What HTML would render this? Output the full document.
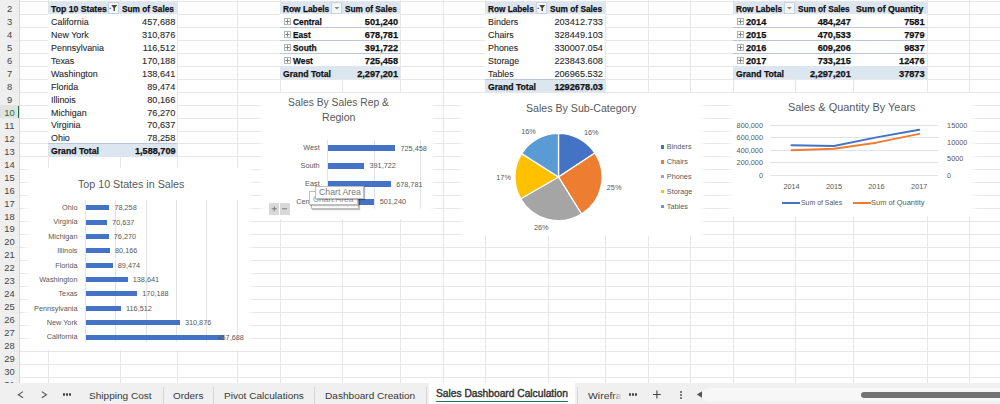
<!DOCTYPE html>
<html><head><meta charset="utf-8"><style>
html,body{margin:0;padding:0;width:1000px;height:404px;overflow:hidden;background:#fff}
body{position:relative;font-family:"Liberation Sans",sans-serif}
.t{position:absolute;white-space:pre;font-family:"Liberation Sans",sans-serif}
</style></head><body>
<div style="position:absolute;left:0.00px;top:0.00px;width:1000.00px;height:404.00px;background:#ffffff;"></div>
<div style="position:absolute;left:19.30px;top:1.00px;width:980.70px;height:1.00px;background:#e7e7e7;"></div>
<div style="position:absolute;left:19.30px;top:14.00px;width:980.70px;height:1.00px;background:#e7e7e7;"></div>
<div style="position:absolute;left:19.30px;top:27.00px;width:980.70px;height:1.00px;background:#e7e7e7;"></div>
<div style="position:absolute;left:19.30px;top:40.00px;width:980.70px;height:1.00px;background:#e7e7e7;"></div>
<div style="position:absolute;left:19.30px;top:53.00px;width:980.70px;height:1.00px;background:#e7e7e7;"></div>
<div style="position:absolute;left:19.30px;top:66.00px;width:980.70px;height:1.00px;background:#e7e7e7;"></div>
<div style="position:absolute;left:19.30px;top:79.00px;width:980.70px;height:1.00px;background:#e7e7e7;"></div>
<div style="position:absolute;left:19.30px;top:92.00px;width:980.70px;height:1.00px;background:#e7e7e7;"></div>
<div style="position:absolute;left:19.30px;top:105.00px;width:980.70px;height:1.00px;background:#e7e7e7;"></div>
<div style="position:absolute;left:19.30px;top:118.00px;width:980.70px;height:1.00px;background:#e7e7e7;"></div>
<div style="position:absolute;left:19.30px;top:131.00px;width:980.70px;height:1.00px;background:#e7e7e7;"></div>
<div style="position:absolute;left:19.30px;top:143.00px;width:980.70px;height:1.00px;background:#e7e7e7;"></div>
<div style="position:absolute;left:19.30px;top:156.00px;width:980.70px;height:1.00px;background:#e7e7e7;"></div>
<div style="position:absolute;left:19.30px;top:169.00px;width:980.70px;height:1.00px;background:#e7e7e7;"></div>
<div style="position:absolute;left:19.30px;top:182.00px;width:980.70px;height:1.00px;background:#e7e7e7;"></div>
<div style="position:absolute;left:19.30px;top:195.00px;width:980.70px;height:1.00px;background:#e7e7e7;"></div>
<div style="position:absolute;left:19.30px;top:208.00px;width:980.70px;height:1.00px;background:#e7e7e7;"></div>
<div style="position:absolute;left:19.30px;top:221.00px;width:980.70px;height:1.00px;background:#e7e7e7;"></div>
<div style="position:absolute;left:19.30px;top:234.00px;width:980.70px;height:1.00px;background:#e7e7e7;"></div>
<div style="position:absolute;left:19.30px;top:247.00px;width:980.70px;height:1.00px;background:#e7e7e7;"></div>
<div style="position:absolute;left:19.30px;top:260.00px;width:980.70px;height:1.00px;background:#e7e7e7;"></div>
<div style="position:absolute;left:19.30px;top:273.00px;width:980.70px;height:1.00px;background:#e7e7e7;"></div>
<div style="position:absolute;left:19.30px;top:286.00px;width:980.70px;height:1.00px;background:#e7e7e7;"></div>
<div style="position:absolute;left:19.30px;top:299.00px;width:980.70px;height:1.00px;background:#e7e7e7;"></div>
<div style="position:absolute;left:19.30px;top:312.00px;width:980.70px;height:1.00px;background:#e7e7e7;"></div>
<div style="position:absolute;left:19.30px;top:325.00px;width:980.70px;height:1.00px;background:#e7e7e7;"></div>
<div style="position:absolute;left:19.30px;top:338.00px;width:980.70px;height:1.00px;background:#e7e7e7;"></div>
<div style="position:absolute;left:19.30px;top:351.00px;width:980.70px;height:1.00px;background:#e7e7e7;"></div>
<div style="position:absolute;left:19.30px;top:364.00px;width:980.70px;height:1.00px;background:#e7e7e7;"></div>
<div style="position:absolute;left:19.30px;top:377.00px;width:980.70px;height:1.00px;background:#e7e7e7;"></div>
<div style="position:absolute;left:48.00px;top:0.00px;width:1.00px;height:383.30px;background:#e7e7e7;"></div>
<div style="position:absolute;left:120.00px;top:0.00px;width:1.00px;height:383.30px;background:#e7e7e7;"></div>
<div style="position:absolute;left:177.00px;top:0.00px;width:1.00px;height:383.30px;background:#e7e7e7;"></div>
<div style="position:absolute;left:237.00px;top:0.00px;width:1.00px;height:383.30px;background:#e7e7e7;"></div>
<div style="position:absolute;left:280.00px;top:0.00px;width:1.00px;height:383.30px;background:#e7e7e7;"></div>
<div style="position:absolute;left:342.00px;top:0.00px;width:1.00px;height:383.30px;background:#e7e7e7;"></div>
<div style="position:absolute;left:400.00px;top:0.00px;width:1.00px;height:383.30px;background:#e7e7e7;"></div>
<div style="position:absolute;left:443.00px;top:0.00px;width:1.00px;height:383.30px;background:#e7e7e7;"></div>
<div style="position:absolute;left:485.00px;top:0.00px;width:1.00px;height:383.30px;background:#e7e7e7;"></div>
<div style="position:absolute;left:548.00px;top:0.00px;width:1.00px;height:383.30px;background:#e7e7e7;"></div>
<div style="position:absolute;left:605.00px;top:0.00px;width:1.00px;height:383.30px;background:#e7e7e7;"></div>
<div style="position:absolute;left:648.00px;top:0.00px;width:1.00px;height:383.30px;background:#e7e7e7;"></div>
<div style="position:absolute;left:690.00px;top:0.00px;width:1.00px;height:383.30px;background:#e7e7e7;"></div>
<div style="position:absolute;left:733.00px;top:0.00px;width:1.00px;height:383.30px;background:#e7e7e7;"></div>
<div style="position:absolute;left:795.00px;top:0.00px;width:1.00px;height:383.30px;background:#e7e7e7;"></div>
<div style="position:absolute;left:853.00px;top:0.00px;width:1.00px;height:383.30px;background:#e7e7e7;"></div>
<div style="position:absolute;left:927.00px;top:0.00px;width:1.00px;height:383.30px;background:#e7e7e7;"></div>
<div style="position:absolute;left:969.00px;top:0.00px;width:1.00px;height:383.30px;background:#e7e7e7;"></div>
<div style="position:absolute;left:48.00px;top:1.50px;width:129.00px;height:155.40px;background:#ffffff;"></div>
<div style="position:absolute;left:48.00px;top:1.50px;width:129.00px;height:12.95px;background:#dce6f1;"></div>
<div style="position:absolute;left:107.70px;top:1.70px;width:11.50px;height:12.25px;background:#f4f6fa;border:1px solid #c9d3e0;box-sizing:border-box;"></div>
<svg style="position:absolute;left:107.70px;top:1.70px" width="11.50" height="12.25"><path d="M3.25 3.12h6l-2.3 3v3h-1.4v-3z" fill="#444"/><rect x="1.55" y="5.82" width="1.6" height="0.9" fill="#444"/></svg>
<div class="t" style="left:51.00px;top:4.91px;font-size:9.2px;line-height:9.2px;color:#111111;font-weight:bold;transform:scaleX(0.9470);transform-origin:0 0;-webkit-text-stroke:0.25px #111111;">Top 10 States</div>
<div class="t" style="left:122.00px;top:4.91px;font-size:9.2px;line-height:9.2px;color:#111111;font-weight:bold;transform:scaleX(0.9001);transform-origin:0 0;-webkit-text-stroke:0.25px #111111;">Sum of Sales</div>
<div class="t" style="left:51.00px;top:17.86px;font-size:9.2px;line-height:9.2px;color:#2a2a2a;transform:scaleX(0.9700);transform-origin:0 0;-webkit-text-stroke:0.1px #2a2a2a;">California</div>
<div class="t" style="left:142.04px;top:17.86px;font-size:9.2px;line-height:9.2px;color:#2a2a2a;-webkit-text-stroke:0.1px #2a2a2a;">457,688</div>
<div class="t" style="left:51.00px;top:30.81px;font-size:9.2px;line-height:9.2px;color:#2a2a2a;transform:scaleX(0.9700);transform-origin:0 0;-webkit-text-stroke:0.1px #2a2a2a;">New York</div>
<div class="t" style="left:142.04px;top:30.81px;font-size:9.2px;line-height:9.2px;color:#2a2a2a;-webkit-text-stroke:0.1px #2a2a2a;">310,876</div>
<div class="t" style="left:51.00px;top:43.76px;font-size:9.2px;line-height:9.2px;color:#2a2a2a;transform:scaleX(0.9700);transform-origin:0 0;-webkit-text-stroke:0.1px #2a2a2a;">Pennsylvania</div>
<div class="t" style="left:142.73px;top:43.76px;font-size:9.2px;line-height:9.2px;color:#2a2a2a;-webkit-text-stroke:0.1px #2a2a2a;">116,512</div>
<div class="t" style="left:51.00px;top:56.71px;font-size:9.2px;line-height:9.2px;color:#2a2a2a;transform:scaleX(0.9700);transform-origin:0 0;-webkit-text-stroke:0.1px #2a2a2a;">Texas</div>
<div class="t" style="left:142.04px;top:56.71px;font-size:9.2px;line-height:9.2px;color:#2a2a2a;-webkit-text-stroke:0.1px #2a2a2a;">170,188</div>
<div class="t" style="left:51.00px;top:69.66px;font-size:9.2px;line-height:9.2px;color:#2a2a2a;transform:scaleX(0.9700);transform-origin:0 0;-webkit-text-stroke:0.1px #2a2a2a;">Washington</div>
<div class="t" style="left:142.04px;top:69.66px;font-size:9.2px;line-height:9.2px;color:#2a2a2a;-webkit-text-stroke:0.1px #2a2a2a;">138,641</div>
<div class="t" style="left:51.00px;top:82.61px;font-size:9.2px;line-height:9.2px;color:#2a2a2a;transform:scaleX(0.9700);transform-origin:0 0;-webkit-text-stroke:0.1px #2a2a2a;">Florida</div>
<div class="t" style="left:147.16px;top:82.61px;font-size:9.2px;line-height:9.2px;color:#2a2a2a;-webkit-text-stroke:0.1px #2a2a2a;">89,474</div>
<div class="t" style="left:51.00px;top:95.56px;font-size:9.2px;line-height:9.2px;color:#2a2a2a;transform:scaleX(0.9700);transform-origin:0 0;-webkit-text-stroke:0.1px #2a2a2a;">Illinois</div>
<div class="t" style="left:147.16px;top:95.56px;font-size:9.2px;line-height:9.2px;color:#2a2a2a;-webkit-text-stroke:0.1px #2a2a2a;">80,166</div>
<div class="t" style="left:51.00px;top:108.51px;font-size:9.2px;line-height:9.2px;color:#2a2a2a;transform:scaleX(0.9700);transform-origin:0 0;-webkit-text-stroke:0.1px #2a2a2a;">Michigan</div>
<div class="t" style="left:147.16px;top:108.51px;font-size:9.2px;line-height:9.2px;color:#2a2a2a;-webkit-text-stroke:0.1px #2a2a2a;">76,270</div>
<div class="t" style="left:51.00px;top:121.46px;font-size:9.2px;line-height:9.2px;color:#2a2a2a;transform:scaleX(0.9700);transform-origin:0 0;-webkit-text-stroke:0.1px #2a2a2a;">Virginia</div>
<div class="t" style="left:147.16px;top:121.46px;font-size:9.2px;line-height:9.2px;color:#2a2a2a;-webkit-text-stroke:0.1px #2a2a2a;">70,637</div>
<div class="t" style="left:51.00px;top:134.41px;font-size:9.2px;line-height:9.2px;color:#2a2a2a;transform:scaleX(0.9700);transform-origin:0 0;-webkit-text-stroke:0.1px #2a2a2a;">Ohio</div>
<div class="t" style="left:147.16px;top:134.41px;font-size:9.2px;line-height:9.2px;color:#2a2a2a;-webkit-text-stroke:0.1px #2a2a2a;">78,258</div>
<div style="position:absolute;left:48.00px;top:143.95px;width:129.00px;height:12.95px;background:#dce6f1;"></div>
<div style="position:absolute;left:48.00px;top:143.00px;width:129.00px;height:1.00px;background:#b9c6db;"></div>
<div class="t" style="left:51.00px;top:147.36px;font-size:9.2px;line-height:9.2px;color:#111111;font-weight:bold;transform:scaleX(0.9423);transform-origin:0 0;-webkit-text-stroke:0.25px #111111;">Grand Total</div>
<div class="t" style="left:134.70px;top:147.36px;font-size:9.2px;line-height:9.2px;color:#111111;font-weight:bold;transform:scaleX(0.9920);transform-origin:0 0;-webkit-text-stroke:0.25px #111111;">1,588,709</div>
<div style="position:absolute;left:280.00px;top:1.50px;width:120.00px;height:77.70px;background:#ffffff;"></div>
<div style="position:absolute;left:280.00px;top:1.50px;width:120.00px;height:12.95px;background:#dce6f1;"></div>
<div style="position:absolute;left:330.60px;top:1.70px;width:11.70px;height:12.25px;background:#f4f6fa;border:1px solid #c9d3e0;box-sizing:border-box;"></div>
<svg style="position:absolute;left:330.60px;top:1.70px" width="11.70" height="12.25"><path d="M3.35 5.12h5l-2.5 2.5z" fill="#888"/></svg>
<div class="t" style="left:282.70px;top:4.91px;font-size:9.2px;line-height:9.2px;color:#111111;font-weight:bold;transform:scaleX(0.9057);transform-origin:0 0;-webkit-text-stroke:0.25px #111111;">Row Labels</div>
<div class="t" style="left:345.00px;top:4.91px;font-size:9.2px;line-height:9.2px;color:#111111;font-weight:bold;transform:scaleX(0.9001);transform-origin:0 0;-webkit-text-stroke:0.25px #111111;">Sum of Sales</div>
<svg style="position:absolute;left:283.60px;top:18.05px" width="7" height="7"><rect x="0.5" y="0.5" width="6" height="6" fill="#fff" stroke="#b4b4b4" stroke-width="1"/><path d="M1.3 3.5h4.4M3.5 1.3v4.4" stroke="#777" stroke-width="0.9"/></svg>
<div class="t" style="left:292.50px;top:17.86px;font-size:9.2px;line-height:9.2px;color:#111111;font-weight:bold;transform:scaleX(0.9100);transform-origin:0 0;-webkit-text-stroke:0.25px #111111;">Central</div>
<div class="t" style="left:364.84px;top:17.86px;font-size:9.2px;line-height:9.2px;color:#111111;font-weight:bold;-webkit-text-stroke:0.25px #111111;">501,240</div>
<div style="position:absolute;left:280.00px;top:27.00px;width:120.00px;height:1.00px;background:#b9c6db;"></div>
<svg style="position:absolute;left:283.60px;top:31.00px" width="7" height="7"><rect x="0.5" y="0.5" width="6" height="6" fill="#fff" stroke="#b4b4b4" stroke-width="1"/><path d="M1.3 3.5h4.4M3.5 1.3v4.4" stroke="#777" stroke-width="0.9"/></svg>
<div class="t" style="left:292.50px;top:30.81px;font-size:9.2px;line-height:9.2px;color:#111111;font-weight:bold;transform:scaleX(0.9100);transform-origin:0 0;-webkit-text-stroke:0.25px #111111;">East</div>
<div class="t" style="left:364.84px;top:30.81px;font-size:9.2px;line-height:9.2px;color:#111111;font-weight:bold;-webkit-text-stroke:0.25px #111111;">678,781</div>
<div style="position:absolute;left:280.00px;top:40.00px;width:120.00px;height:1.00px;background:#b9c6db;"></div>
<svg style="position:absolute;left:283.60px;top:43.95px" width="7" height="7"><rect x="0.5" y="0.5" width="6" height="6" fill="#fff" stroke="#b4b4b4" stroke-width="1"/><path d="M1.3 3.5h4.4M3.5 1.3v4.4" stroke="#777" stroke-width="0.9"/></svg>
<div class="t" style="left:292.50px;top:43.76px;font-size:9.2px;line-height:9.2px;color:#111111;font-weight:bold;transform:scaleX(0.9100);transform-origin:0 0;-webkit-text-stroke:0.25px #111111;">South</div>
<div class="t" style="left:364.84px;top:43.76px;font-size:9.2px;line-height:9.2px;color:#111111;font-weight:bold;-webkit-text-stroke:0.25px #111111;">391,722</div>
<div style="position:absolute;left:280.00px;top:53.00px;width:120.00px;height:1.00px;background:#b9c6db;"></div>
<svg style="position:absolute;left:283.60px;top:56.90px" width="7" height="7"><rect x="0.5" y="0.5" width="6" height="6" fill="#fff" stroke="#b4b4b4" stroke-width="1"/><path d="M1.3 3.5h4.4M3.5 1.3v4.4" stroke="#777" stroke-width="0.9"/></svg>
<div class="t" style="left:292.50px;top:56.71px;font-size:9.2px;line-height:9.2px;color:#111111;font-weight:bold;transform:scaleX(0.9100);transform-origin:0 0;-webkit-text-stroke:0.25px #111111;">West</div>
<div class="t" style="left:364.84px;top:56.71px;font-size:9.2px;line-height:9.2px;color:#111111;font-weight:bold;-webkit-text-stroke:0.25px #111111;">725,458</div>
<div style="position:absolute;left:280.00px;top:66.00px;width:120.00px;height:1.00px;background:#b9c6db;"></div>
<div style="position:absolute;left:280.00px;top:66.25px;width:120.00px;height:12.95px;background:#dce6f1;"></div>
<div class="t" style="left:282.70px;top:69.66px;font-size:9.2px;line-height:9.2px;color:#111111;font-weight:bold;transform:scaleX(0.9423);transform-origin:0 0;-webkit-text-stroke:0.25px #111111;">Grand Total</div>
<div class="t" style="left:357.17px;top:69.66px;font-size:9.2px;line-height:9.2px;color:#111111;font-weight:bold;-webkit-text-stroke:0.25px #111111;">2,297,201</div>
<div style="position:absolute;left:485.00px;top:1.50px;width:120.00px;height:90.65px;background:#ffffff;"></div>
<div style="position:absolute;left:485.00px;top:1.50px;width:120.00px;height:12.95px;background:#dce6f1;"></div>
<div style="position:absolute;left:536.00px;top:1.70px;width:11.40px;height:12.25px;background:#f4f6fa;border:1px solid #c9d3e0;box-sizing:border-box;"></div>
<svg style="position:absolute;left:536.00px;top:1.70px" width="11.40" height="12.25"><path d="M3.20 3.12h6l-2.3 3v3h-1.4v-3z" fill="#444"/><rect x="1.50" y="5.82" width="1.6" height="0.9" fill="#444"/></svg>
<div class="t" style="left:488.10px;top:4.91px;font-size:9.2px;line-height:9.2px;color:#111111;font-weight:bold;transform:scaleX(0.8959);transform-origin:0 0;-webkit-text-stroke:0.25px #111111;">Row Labels</div>
<div class="t" style="left:550.00px;top:4.91px;font-size:9.2px;line-height:9.2px;color:#111111;font-weight:bold;transform:scaleX(0.9018);transform-origin:0 0;-webkit-text-stroke:0.25px #111111;">Sum of Sales</div>
<div class="t" style="left:488.10px;top:17.86px;font-size:9.2px;line-height:9.2px;color:#2a2a2a;transform:scaleX(0.9700);transform-origin:0 0;-webkit-text-stroke:0.1px #2a2a2a;">Binders</div>
<div class="t" style="left:554.39px;top:17.86px;font-size:9.2px;line-height:9.2px;color:#2a2a2a;-webkit-text-stroke:0.1px #2a2a2a;">203412.733</div>
<div class="t" style="left:488.10px;top:30.81px;font-size:9.2px;line-height:9.2px;color:#2a2a2a;transform:scaleX(0.9700);transform-origin:0 0;-webkit-text-stroke:0.1px #2a2a2a;">Chairs</div>
<div class="t" style="left:554.39px;top:30.81px;font-size:9.2px;line-height:9.2px;color:#2a2a2a;-webkit-text-stroke:0.1px #2a2a2a;">328449.103</div>
<div class="t" style="left:488.10px;top:43.76px;font-size:9.2px;line-height:9.2px;color:#2a2a2a;transform:scaleX(0.9700);transform-origin:0 0;-webkit-text-stroke:0.1px #2a2a2a;">Phones</div>
<div class="t" style="left:554.39px;top:43.76px;font-size:9.2px;line-height:9.2px;color:#2a2a2a;-webkit-text-stroke:0.1px #2a2a2a;">330007.054</div>
<div class="t" style="left:488.10px;top:56.71px;font-size:9.2px;line-height:9.2px;color:#2a2a2a;transform:scaleX(0.9700);transform-origin:0 0;-webkit-text-stroke:0.1px #2a2a2a;">Storage</div>
<div class="t" style="left:554.39px;top:56.71px;font-size:9.2px;line-height:9.2px;color:#2a2a2a;-webkit-text-stroke:0.1px #2a2a2a;">223843.608</div>
<div class="t" style="left:488.10px;top:69.66px;font-size:9.2px;line-height:9.2px;color:#2a2a2a;transform:scaleX(0.9700);transform-origin:0 0;-webkit-text-stroke:0.1px #2a2a2a;">Tables</div>
<div class="t" style="left:554.39px;top:69.66px;font-size:9.2px;line-height:9.2px;color:#2a2a2a;-webkit-text-stroke:0.1px #2a2a2a;">206965.532</div>
<div style="position:absolute;left:485.00px;top:79.20px;width:120.00px;height:12.95px;background:#dce6f1;"></div>
<div style="position:absolute;left:485.00px;top:79.00px;width:120.00px;height:1.00px;background:#b9c6db;"></div>
<div class="t" style="left:488.10px;top:82.61px;font-size:9.2px;line-height:9.2px;color:#111111;font-weight:bold;transform:scaleX(0.9423);transform-origin:0 0;-webkit-text-stroke:0.25px #111111;">Grand Total</div>
<div class="t" style="left:554.39px;top:82.61px;font-size:9.2px;line-height:9.2px;color:#111111;font-weight:bold;-webkit-text-stroke:0.25px #111111;">1292678.03</div>
<div style="position:absolute;left:733.00px;top:1.50px;width:194.00px;height:77.70px;background:#ffffff;"></div>
<div style="position:absolute;left:733.00px;top:1.50px;width:194.00px;height:12.95px;background:#dce6f1;"></div>
<div style="position:absolute;left:783.70px;top:1.70px;width:10.90px;height:12.25px;background:#f4f6fa;border:1px solid #c9d3e0;box-sizing:border-box;"></div>
<svg style="position:absolute;left:783.70px;top:1.70px" width="10.90" height="12.25"><path d="M2.95 5.12h5l-2.5 2.5z" fill="#888"/></svg>
<div class="t" style="left:735.90px;top:4.91px;font-size:9.2px;line-height:9.2px;color:#111111;font-weight:bold;transform:scaleX(0.9018);transform-origin:0 0;-webkit-text-stroke:0.25px #111111;">Row Labels</div>
<div class="t" style="left:797.90px;top:4.91px;font-size:9.2px;line-height:9.2px;color:#111111;font-weight:bold;transform:scaleX(0.8949);transform-origin:0 0;-webkit-text-stroke:0.25px #111111;">Sum of Sales</div>
<div class="t" style="left:855.60px;top:4.91px;font-size:9.2px;line-height:9.2px;color:#111111;font-weight:bold;transform:scaleX(0.9487);transform-origin:0 0;-webkit-text-stroke:0.25px #111111;">Sum of Quantity</div>
<svg style="position:absolute;left:736.80px;top:18.05px" width="7" height="7"><rect x="0.5" y="0.5" width="6" height="6" fill="#fff" stroke="#b4b4b4" stroke-width="1"/><path d="M1.3 3.5h4.4M3.5 1.3v4.4" stroke="#777" stroke-width="0.9"/></svg>
<div class="t" style="left:745.90px;top:17.86px;font-size:9.2px;line-height:9.2px;color:#111111;font-weight:bold;-webkit-text-stroke:0.25px #111111;">2014</div>
<div class="t" style="left:817.64px;top:17.86px;font-size:9.2px;line-height:9.2px;color:#111111;font-weight:bold;-webkit-text-stroke:0.25px #111111;">484,247</div>
<div class="t" style="left:904.13px;top:17.86px;font-size:9.2px;line-height:9.2px;color:#111111;font-weight:bold;-webkit-text-stroke:0.25px #111111;">7581</div>
<div style="position:absolute;left:733.00px;top:27.00px;width:194.00px;height:1.00px;background:#b9c6db;"></div>
<svg style="position:absolute;left:736.80px;top:31.00px" width="7" height="7"><rect x="0.5" y="0.5" width="6" height="6" fill="#fff" stroke="#b4b4b4" stroke-width="1"/><path d="M1.3 3.5h4.4M3.5 1.3v4.4" stroke="#777" stroke-width="0.9"/></svg>
<div class="t" style="left:745.90px;top:30.81px;font-size:9.2px;line-height:9.2px;color:#111111;font-weight:bold;-webkit-text-stroke:0.25px #111111;">2015</div>
<div class="t" style="left:817.64px;top:30.81px;font-size:9.2px;line-height:9.2px;color:#111111;font-weight:bold;-webkit-text-stroke:0.25px #111111;">470,533</div>
<div class="t" style="left:904.13px;top:30.81px;font-size:9.2px;line-height:9.2px;color:#111111;font-weight:bold;-webkit-text-stroke:0.25px #111111;">7979</div>
<div style="position:absolute;left:733.00px;top:40.00px;width:194.00px;height:1.00px;background:#b9c6db;"></div>
<svg style="position:absolute;left:736.80px;top:43.95px" width="7" height="7"><rect x="0.5" y="0.5" width="6" height="6" fill="#fff" stroke="#b4b4b4" stroke-width="1"/><path d="M1.3 3.5h4.4M3.5 1.3v4.4" stroke="#777" stroke-width="0.9"/></svg>
<div class="t" style="left:745.90px;top:43.76px;font-size:9.2px;line-height:9.2px;color:#111111;font-weight:bold;-webkit-text-stroke:0.25px #111111;">2016</div>
<div class="t" style="left:817.64px;top:43.76px;font-size:9.2px;line-height:9.2px;color:#111111;font-weight:bold;-webkit-text-stroke:0.25px #111111;">609,206</div>
<div class="t" style="left:904.13px;top:43.76px;font-size:9.2px;line-height:9.2px;color:#111111;font-weight:bold;-webkit-text-stroke:0.25px #111111;">9837</div>
<div style="position:absolute;left:733.00px;top:53.00px;width:194.00px;height:1.00px;background:#b9c6db;"></div>
<svg style="position:absolute;left:736.80px;top:56.90px" width="7" height="7"><rect x="0.5" y="0.5" width="6" height="6" fill="#fff" stroke="#b4b4b4" stroke-width="1"/><path d="M1.3 3.5h4.4M3.5 1.3v4.4" stroke="#777" stroke-width="0.9"/></svg>
<div class="t" style="left:745.90px;top:56.71px;font-size:9.2px;line-height:9.2px;color:#111111;font-weight:bold;-webkit-text-stroke:0.25px #111111;">2017</div>
<div class="t" style="left:817.64px;top:56.71px;font-size:9.2px;line-height:9.2px;color:#111111;font-weight:bold;-webkit-text-stroke:0.25px #111111;">733,215</div>
<div class="t" style="left:899.02px;top:56.71px;font-size:9.2px;line-height:9.2px;color:#111111;font-weight:bold;-webkit-text-stroke:0.25px #111111;">12476</div>
<div style="position:absolute;left:733.00px;top:66.00px;width:194.00px;height:1.00px;background:#b9c6db;"></div>
<div style="position:absolute;left:733.00px;top:66.25px;width:194.00px;height:12.95px;background:#dce6f1;"></div>
<div class="t" style="left:735.90px;top:69.66px;font-size:9.2px;line-height:9.2px;color:#111111;font-weight:bold;transform:scaleX(0.9423);transform-origin:0 0;-webkit-text-stroke:0.25px #111111;">Grand Total</div>
<div class="t" style="left:809.97px;top:69.66px;font-size:9.2px;line-height:9.2px;color:#111111;font-weight:bold;-webkit-text-stroke:0.25px #111111;">2,297,201</div>
<div class="t" style="left:899.02px;top:69.66px;font-size:9.2px;line-height:9.2px;color:#111111;font-weight:bold;-webkit-text-stroke:0.25px #111111;">37873</div>
<div style="position:absolute;left:30.00px;top:168.00px;width:217.50px;height:182.00px;background:#ffffff;"></div>
<div style="position:absolute;left:23.00px;top:168.00px;width:7.00px;height:182.00px;background:linear-gradient(90deg,rgba(255,255,255,0),rgba(255,255,255,0.85));"></div>
<div style="position:absolute;left:247.50px;top:168.00px;width:7.00px;height:182.00px;background:linear-gradient(90deg,rgba(255,255,255,0.85),rgba(255,255,255,0));"></div>
<div class="t" style="left:77.50px;top:178.10px;font-size:11.7px;line-height:11.7px;color:#595959;transform:scaleX(0.9148);transform-origin:0 0;">Top 10 States in Sales</div>
<div style="position:absolute;left:85.00px;top:200.20px;width:1.00px;height:142.30px;background:#e3e3e3;"></div>
<div style="position:absolute;left:115.30px;top:200.20px;width:1.00px;height:142.30px;background:#e3e3e3;"></div>
<div style="position:absolute;left:145.60px;top:200.20px;width:1.00px;height:142.30px;background:#e3e3e3;"></div>
<div style="position:absolute;left:175.90px;top:200.20px;width:1.00px;height:142.30px;background:#e3e3e3;"></div>
<div style="position:absolute;left:206.20px;top:200.20px;width:1.00px;height:142.30px;background:#e3e3e3;"></div>
<div style="position:absolute;left:236.50px;top:200.20px;width:1.00px;height:142.30px;background:#e3e3e3;"></div>
<div style="position:absolute;left:85.50px;top:205.20px;width:23.71px;height:5.00px;background:#4472c4;"></div>
<div class="t" style="left:62.08px;top:204.12px;font-size:7.3px;line-height:7.3px;color:#595959;">Ohio</div>
<div class="t" style="left:114.41px;top:204.22px;font-size:7.3px;line-height:7.3px;color:#595959;">78,258</div>
<div style="position:absolute;left:85.50px;top:219.57px;width:21.40px;height:5.00px;background:#4472c4;"></div>
<div class="t" style="left:53.29px;top:218.49px;font-size:7.3px;line-height:7.3px;color:#595959;">Virginia</div>
<div class="t" style="left:112.10px;top:218.59px;font-size:7.3px;line-height:7.3px;color:#595959;">70,637</div>
<div style="position:absolute;left:85.50px;top:233.94px;width:23.11px;height:5.00px;background:#4472c4;"></div>
<div class="t" style="left:48.29px;top:232.86px;font-size:7.3px;line-height:7.3px;color:#595959;">Michigan</div>
<div class="t" style="left:113.81px;top:232.96px;font-size:7.3px;line-height:7.3px;color:#595959;">76,270</div>
<div style="position:absolute;left:85.50px;top:248.31px;width:24.29px;height:5.00px;background:#4472c4;"></div>
<div class="t" style="left:57.21px;top:247.23px;font-size:7.3px;line-height:7.3px;color:#595959;">Illinois</div>
<div class="t" style="left:114.99px;top:247.33px;font-size:7.3px;line-height:7.3px;color:#595959;">80,166</div>
<div style="position:absolute;left:85.50px;top:262.68px;width:27.11px;height:5.00px;background:#4472c4;"></div>
<div class="t" style="left:55.19px;top:261.60px;font-size:7.3px;line-height:7.3px;color:#595959;">Florida</div>
<div class="t" style="left:117.81px;top:261.70px;font-size:7.3px;line-height:7.3px;color:#595959;">89,474</div>
<div style="position:absolute;left:85.50px;top:277.05px;width:42.01px;height:5.00px;background:#4472c4;"></div>
<div class="t" style="left:39.22px;top:275.97px;font-size:7.3px;line-height:7.3px;color:#595959;">Washington</div>
<div class="t" style="left:132.71px;top:276.07px;font-size:7.3px;line-height:7.3px;color:#595959;">138,641</div>
<div style="position:absolute;left:85.50px;top:291.42px;width:51.57px;height:5.00px;background:#4472c4;"></div>
<div class="t" style="left:58.43px;top:290.34px;font-size:7.3px;line-height:7.3px;color:#595959;">Texas</div>
<div class="t" style="left:142.27px;top:290.44px;font-size:7.3px;line-height:7.3px;color:#595959;">170,188</div>
<div style="position:absolute;left:85.50px;top:305.79px;width:35.30px;height:5.00px;background:#4472c4;"></div>
<div class="t" style="left:34.08px;top:304.71px;font-size:7.3px;line-height:7.3px;color:#595959;">Pennsylvania</div>
<div class="t" style="left:126.00px;top:304.81px;font-size:7.3px;line-height:7.3px;color:#595959;">116,512</div>
<div style="position:absolute;left:85.50px;top:320.16px;width:94.20px;height:5.00px;background:#4472c4;"></div>
<div class="t" style="left:46.66px;top:319.08px;font-size:7.3px;line-height:7.3px;color:#595959;">New York</div>
<div class="t" style="left:184.90px;top:319.18px;font-size:7.3px;line-height:7.3px;color:#595959;">310,876</div>
<div style="position:absolute;left:85.50px;top:334.53px;width:138.68px;height:5.00px;background:#4472c4;"></div>
<div class="t" style="left:46.66px;top:333.45px;font-size:7.3px;line-height:7.3px;color:#595959;">California</div>
<div class="t" style="left:217.50px;top:333.55px;font-size:7.3px;line-height:7.3px;color:#595959;">457,688</div>
<div style="position:absolute;left:264.00px;top:93.00px;width:166.00px;height:126.00px;background:#ffffff;"></div>
<div style="position:absolute;left:257.00px;top:93.00px;width:7.00px;height:126.00px;background:linear-gradient(90deg,rgba(255,255,255,0),rgba(255,255,255,0.85));"></div>
<div style="position:absolute;left:430.00px;top:93.00px;width:7.00px;height:126.00px;background:linear-gradient(90deg,rgba(255,255,255,0.85),rgba(255,255,255,0));"></div>
<div class="t" style="left:288.30px;top:95.70px;font-size:11.7px;line-height:11.7px;color:#595959;transform:scaleX(0.8833);transform-origin:0 0;">Sales By Sales Rep &amp;</div>
<div class="t" style="left:322.40px;top:110.50px;font-size:11.7px;line-height:11.7px;color:#595959;transform:scaleX(0.9035);transform-origin:0 0;">Region</div>
<div style="position:absolute;left:327.10px;top:139.70px;width:1.00px;height:69.60px;background:#e3e3e3;"></div>
<div style="position:absolute;left:374.30px;top:139.70px;width:1.00px;height:69.60px;background:#e3e3e3;"></div>
<div style="position:absolute;left:419.80px;top:139.70px;width:1.00px;height:69.60px;background:#e3e3e3;"></div>
<div style="position:absolute;left:327.60px;top:144.90px;width:67.40px;height:6.20px;background:#4472c4;"></div>
<div class="t" style="left:303.20px;top:144.42px;font-size:7.3px;line-height:7.3px;color:#595959;">West</div>
<div class="t" style="left:400.50px;top:144.52px;font-size:7.3px;line-height:7.3px;color:#595959;">725,458</div>
<div style="position:absolute;left:327.60px;top:162.60px;width:36.39px;height:6.20px;background:#4472c4;"></div>
<div class="t" style="left:300.62px;top:162.12px;font-size:7.3px;line-height:7.3px;color:#595959;">South</div>
<div class="t" style="left:369.49px;top:162.22px;font-size:7.3px;line-height:7.3px;color:#595959;">391,722</div>
<div style="position:absolute;left:327.60px;top:180.90px;width:63.06px;height:6.20px;background:#4472c4;"></div>
<div class="t" style="left:305.09px;top:180.42px;font-size:7.3px;line-height:7.3px;color:#595959;">East</div>
<div class="t" style="left:396.16px;top:180.52px;font-size:7.3px;line-height:7.3px;color:#595959;">678,781</div>
<div style="position:absolute;left:327.60px;top:198.60px;width:46.57px;height:6.20px;background:#4472c4;"></div>
<div class="t" style="left:296.17px;top:198.12px;font-size:7.3px;line-height:7.3px;color:#595959;">Central</div>
<div class="t" style="left:379.67px;top:198.22px;font-size:7.3px;line-height:7.3px;color:#595959;">501,240</div>
<div style="position:absolute;left:464.00px;top:93.00px;width:236.00px;height:143.00px;background:#ffffff;"></div>
<div style="position:absolute;left:457.00px;top:93.00px;width:7.00px;height:143.00px;background:linear-gradient(90deg,rgba(255,255,255,0),rgba(255,255,255,0.85));"></div>
<div style="position:absolute;left:700.00px;top:93.00px;width:7.00px;height:143.00px;background:linear-gradient(90deg,rgba(255,255,255,0.85),rgba(255,255,255,0));"></div>
<div class="t" style="left:525.80px;top:102.10px;font-size:11.7px;line-height:11.7px;color:#595959;transform:scaleX(0.9078);transform-origin:0 0;">Sales By Sub-Category</div>
<svg style="position:absolute;left:0;top:0" width="1000" height="404"><path d="M558.50 177.00L558.50 133.40A43.6 43.6 0 0 1 594.92 153.03Z" fill="#4472c4" stroke="#fff" stroke-width="1.3" stroke-linejoin="round"/><path d="M558.50 177.00L594.92 153.03A43.6 43.6 0 0 1 581.53 214.02Z" fill="#ed7d31" stroke="#fff" stroke-width="1.3" stroke-linejoin="round"/><path d="M558.50 177.00L581.53 214.02A43.6 43.6 0 0 1 520.73 198.78Z" fill="#a5a5a5" stroke="#fff" stroke-width="1.3" stroke-linejoin="round"/><path d="M558.50 177.00L520.73 198.78A43.6 43.6 0 0 1 521.67 153.66Z" fill="#ffc000" stroke="#fff" stroke-width="1.3" stroke-linejoin="round"/><path d="M558.50 177.00L521.67 153.66A43.6 43.6 0 0 1 558.50 133.40Z" fill="#5b9bd5" stroke="#fff" stroke-width="1.3" stroke-linejoin="round"/></svg>
<div class="t" style="left:584.00px;top:129.02px;font-size:7.3px;line-height:7.3px;color:#595959;">16%</div>
<div class="t" style="left:606.80px;top:184.42px;font-size:7.3px;line-height:7.3px;color:#595959;">25%</div>
<div class="t" style="left:534.00px;top:223.82px;font-size:7.3px;line-height:7.3px;color:#595959;">26%</div>
<div class="t" style="left:496.30px;top:174.32px;font-size:7.3px;line-height:7.3px;color:#595959;">17%</div>
<div class="t" style="left:521.20px;top:128.12px;font-size:7.3px;line-height:7.3px;color:#595959;">16%</div>
<div style="position:absolute;left:660.50px;top:145.10px;width:3.60px;height:3.60px;background:#4472c4;"></div>
<div class="t" style="left:666.80px;top:143.32px;font-size:7.3px;line-height:7.3px;color:#595959;">Binders</div>
<div style="position:absolute;left:660.50px;top:159.95px;width:3.60px;height:3.60px;background:#ed7d31;"></div>
<div class="t" style="left:666.80px;top:158.17px;font-size:7.3px;line-height:7.3px;color:#595959;">Chairs</div>
<div style="position:absolute;left:660.50px;top:174.80px;width:3.60px;height:3.60px;background:#a5a5a5;"></div>
<div class="t" style="left:666.80px;top:173.02px;font-size:7.3px;line-height:7.3px;color:#595959;">Phones</div>
<div style="position:absolute;left:660.50px;top:189.65px;width:3.60px;height:3.60px;background:#ffc000;"></div>
<div class="t" style="left:666.80px;top:187.87px;font-size:7.3px;line-height:7.3px;color:#595959;">Storage</div>
<div style="position:absolute;left:660.50px;top:204.50px;width:3.60px;height:3.60px;background:#5b9bd5;"></div>
<div class="t" style="left:666.80px;top:202.72px;font-size:7.3px;line-height:7.3px;color:#595959;">Tables</div>
<div style="position:absolute;left:733.00px;top:93.00px;width:238.00px;height:123.00px;background:#ffffff;"></div>
<div style="position:absolute;left:726.00px;top:93.00px;width:7.00px;height:123.00px;background:linear-gradient(90deg,rgba(255,255,255,0),rgba(255,255,255,0.85));"></div>
<div style="position:absolute;left:971.00px;top:93.00px;width:7.00px;height:123.00px;background:linear-gradient(90deg,rgba(255,255,255,0.85),rgba(255,255,255,0));"></div>
<div class="t" style="left:788.30px;top:101.10px;font-size:11.7px;line-height:11.7px;color:#595959;transform:scaleX(0.9350);transform-origin:0 0;">Sales &amp; Quantity By Years</div>
<div style="position:absolute;left:770.30px;top:125.00px;width:168.20px;height:1.00px;background:#e3e3e3;"></div>
<div style="position:absolute;left:770.30px;top:137.45px;width:168.20px;height:1.00px;background:#e3e3e3;"></div>
<div style="position:absolute;left:770.30px;top:149.90px;width:168.20px;height:1.00px;background:#e3e3e3;"></div>
<div style="position:absolute;left:770.30px;top:162.35px;width:168.20px;height:1.00px;background:#e3e3e3;"></div>
<div style="position:absolute;left:770.30px;top:174.80px;width:168.20px;height:1.00px;background:#e3e3e3;"></div>
<div class="t" style="left:736.61px;top:121.92px;font-size:7.3px;line-height:7.3px;color:#595959;">800,000</div>
<div class="t" style="left:736.61px;top:134.37px;font-size:7.3px;line-height:7.3px;color:#595959;">600,000</div>
<div class="t" style="left:736.61px;top:146.82px;font-size:7.3px;line-height:7.3px;color:#595959;">400,000</div>
<div class="t" style="left:736.61px;top:159.27px;font-size:7.3px;line-height:7.3px;color:#595959;">200,000</div>
<div class="t" style="left:758.94px;top:171.72px;font-size:7.3px;line-height:7.3px;color:#595959;">0</div>
<div class="t" style="left:947.10px;top:121.92px;font-size:7.3px;line-height:7.3px;color:#595959;">15000</div>
<div class="t" style="left:947.10px;top:138.52px;font-size:7.3px;line-height:7.3px;color:#595959;">10000</div>
<div class="t" style="left:947.10px;top:155.12px;font-size:7.3px;line-height:7.3px;color:#595959;">5000</div>
<div class="t" style="left:947.10px;top:171.72px;font-size:7.3px;line-height:7.3px;color:#595959;">0</div>
<div class="t" style="left:783.38px;top:182.62px;font-size:7.3px;line-height:7.3px;color:#595959;">2014</div>
<div class="t" style="left:825.88px;top:182.62px;font-size:7.3px;line-height:7.3px;color:#595959;">2015</div>
<div class="t" style="left:868.28px;top:182.62px;font-size:7.3px;line-height:7.3px;color:#595959;">2016</div>
<div class="t" style="left:911.08px;top:182.62px;font-size:7.3px;line-height:7.3px;color:#595959;">2017</div>
<svg style="position:absolute;left:0;top:0" width="1000" height="404"><polyline points="791.50,150.13 834.00,148.81 876.40,142.64 919.20,133.88" fill="none" stroke="#ed7d31" stroke-width="2" stroke-linejoin="round" stroke-linecap="round"/><polyline points="791.50,145.16 834.00,146.01 876.40,137.38 919.20,129.66" fill="none" stroke="#4472c4" stroke-width="2" stroke-linejoin="round" stroke-linecap="round"/></svg>
<div style="position:absolute;left:781.90px;top:201.80px;width:18.30px;height:1.80px;background:#4472c4;"></div>
<div class="t" style="left:800.80px;top:199.12px;font-size:7.3px;line-height:7.3px;color:#595959;transform:scaleX(0.9490);transform-origin:0 0;">Sum of Sales</div>
<div style="position:absolute;left:853.20px;top:201.80px;width:17.80px;height:1.80px;background:#ed7d31;"></div>
<div class="t" style="left:871.00px;top:199.12px;font-size:7.3px;line-height:7.3px;color:#595959;transform:scaleX(1.0241);transform-origin:0 0;">Sum of Quantity</div>
<div style="position:absolute;left:0.00px;top:0.00px;width:19.30px;height:383.30px;background:#efefef;"></div>
<div style="position:absolute;left:19.00px;top:0.00px;width:1.00px;height:383.30px;background:#d4d4d4;"></div>
<div style="position:absolute;left:9.00px;top:1.00px;width:10.00px;height:1.00px;background:#ebebeb;"></div>
<div style="position:absolute;left:9.00px;top:14.00px;width:10.00px;height:1.00px;background:#ebebeb;"></div>
<div style="position:absolute;left:9.00px;top:27.00px;width:10.00px;height:1.00px;background:#ebebeb;"></div>
<div style="position:absolute;left:9.00px;top:40.00px;width:10.00px;height:1.00px;background:#ebebeb;"></div>
<div style="position:absolute;left:9.00px;top:53.00px;width:10.00px;height:1.00px;background:#ebebeb;"></div>
<div style="position:absolute;left:9.00px;top:66.00px;width:10.00px;height:1.00px;background:#ebebeb;"></div>
<div style="position:absolute;left:9.00px;top:79.00px;width:10.00px;height:1.00px;background:#ebebeb;"></div>
<div style="position:absolute;left:9.00px;top:92.00px;width:10.00px;height:1.00px;background:#ebebeb;"></div>
<div style="position:absolute;left:9.00px;top:105.00px;width:10.00px;height:1.00px;background:#ebebeb;"></div>
<div style="position:absolute;left:9.00px;top:118.00px;width:10.00px;height:1.00px;background:#ebebeb;"></div>
<div style="position:absolute;left:9.00px;top:131.00px;width:10.00px;height:1.00px;background:#ebebeb;"></div>
<div style="position:absolute;left:9.00px;top:143.00px;width:10.00px;height:1.00px;background:#ebebeb;"></div>
<div style="position:absolute;left:9.00px;top:156.00px;width:10.00px;height:1.00px;background:#ebebeb;"></div>
<div style="position:absolute;left:9.00px;top:169.00px;width:10.00px;height:1.00px;background:#ebebeb;"></div>
<div style="position:absolute;left:9.00px;top:182.00px;width:10.00px;height:1.00px;background:#ebebeb;"></div>
<div style="position:absolute;left:9.00px;top:195.00px;width:10.00px;height:1.00px;background:#ebebeb;"></div>
<div style="position:absolute;left:9.00px;top:208.00px;width:10.00px;height:1.00px;background:#ebebeb;"></div>
<div style="position:absolute;left:9.00px;top:221.00px;width:10.00px;height:1.00px;background:#ebebeb;"></div>
<div style="position:absolute;left:9.00px;top:234.00px;width:10.00px;height:1.00px;background:#ebebeb;"></div>
<div style="position:absolute;left:9.00px;top:247.00px;width:10.00px;height:1.00px;background:#ebebeb;"></div>
<div style="position:absolute;left:9.00px;top:260.00px;width:10.00px;height:1.00px;background:#ebebeb;"></div>
<div style="position:absolute;left:9.00px;top:273.00px;width:10.00px;height:1.00px;background:#ebebeb;"></div>
<div style="position:absolute;left:9.00px;top:286.00px;width:10.00px;height:1.00px;background:#ebebeb;"></div>
<div style="position:absolute;left:9.00px;top:299.00px;width:10.00px;height:1.00px;background:#ebebeb;"></div>
<div style="position:absolute;left:9.00px;top:312.00px;width:10.00px;height:1.00px;background:#ebebeb;"></div>
<div style="position:absolute;left:9.00px;top:325.00px;width:10.00px;height:1.00px;background:#ebebeb;"></div>
<div style="position:absolute;left:9.00px;top:338.00px;width:10.00px;height:1.00px;background:#ebebeb;"></div>
<div style="position:absolute;left:9.00px;top:351.00px;width:10.00px;height:1.00px;background:#ebebeb;"></div>
<div style="position:absolute;left:9.00px;top:364.00px;width:10.00px;height:1.00px;background:#ebebeb;"></div>
<div style="position:absolute;left:9.00px;top:377.00px;width:10.00px;height:1.00px;background:#ebebeb;"></div>
<div style="position:absolute;left:0.00px;top:105.10px;width:19.00px;height:12.95px;background:#e2e2e2;"></div>
<div class="t" style="left:6.89px;top:4.34px;font-size:9.4px;line-height:9.4px;color:#444444;">2</div>
<div class="t" style="left:6.89px;top:17.29px;font-size:9.4px;line-height:9.4px;color:#444444;">3</div>
<div class="t" style="left:6.89px;top:30.24px;font-size:9.4px;line-height:9.4px;color:#444444;">4</div>
<div class="t" style="left:6.89px;top:43.19px;font-size:9.4px;line-height:9.4px;color:#444444;">5</div>
<div class="t" style="left:6.89px;top:56.14px;font-size:9.4px;line-height:9.4px;color:#444444;">6</div>
<div class="t" style="left:6.89px;top:69.09px;font-size:9.4px;line-height:9.4px;color:#444444;">7</div>
<div class="t" style="left:6.89px;top:82.04px;font-size:9.4px;line-height:9.4px;color:#444444;">8</div>
<div class="t" style="left:6.89px;top:94.99px;font-size:9.4px;line-height:9.4px;color:#444444;">9</div>
<div class="t" style="left:4.27px;top:107.94px;font-size:9.4px;line-height:9.4px;color:#1e6e45;">10</div>
<div class="t" style="left:4.62px;top:120.89px;font-size:9.4px;line-height:9.4px;color:#444444;">11</div>
<div class="t" style="left:4.27px;top:133.84px;font-size:9.4px;line-height:9.4px;color:#444444;">12</div>
<div class="t" style="left:4.27px;top:146.79px;font-size:9.4px;line-height:9.4px;color:#444444;">13</div>
<div class="t" style="left:4.27px;top:159.74px;font-size:9.4px;line-height:9.4px;color:#444444;">14</div>
<div class="t" style="left:4.27px;top:172.69px;font-size:9.4px;line-height:9.4px;color:#444444;">15</div>
<div class="t" style="left:4.27px;top:185.64px;font-size:9.4px;line-height:9.4px;color:#444444;">16</div>
<div class="t" style="left:4.27px;top:198.59px;font-size:9.4px;line-height:9.4px;color:#444444;">17</div>
<div class="t" style="left:4.27px;top:211.54px;font-size:9.4px;line-height:9.4px;color:#444444;">18</div>
<div class="t" style="left:4.27px;top:224.49px;font-size:9.4px;line-height:9.4px;color:#444444;">19</div>
<div class="t" style="left:4.27px;top:237.44px;font-size:9.4px;line-height:9.4px;color:#444444;">20</div>
<div class="t" style="left:4.27px;top:250.39px;font-size:9.4px;line-height:9.4px;color:#444444;">21</div>
<div class="t" style="left:4.27px;top:263.34px;font-size:9.4px;line-height:9.4px;color:#444444;">22</div>
<div class="t" style="left:4.27px;top:276.29px;font-size:9.4px;line-height:9.4px;color:#444444;">23</div>
<div class="t" style="left:4.27px;top:289.24px;font-size:9.4px;line-height:9.4px;color:#444444;">24</div>
<div class="t" style="left:4.27px;top:302.19px;font-size:9.4px;line-height:9.4px;color:#444444;">25</div>
<div class="t" style="left:4.27px;top:315.14px;font-size:9.4px;line-height:9.4px;color:#444444;">26</div>
<div class="t" style="left:4.27px;top:328.09px;font-size:9.4px;line-height:9.4px;color:#444444;">27</div>
<div class="t" style="left:4.27px;top:341.04px;font-size:9.4px;line-height:9.4px;color:#444444;">28</div>
<div class="t" style="left:4.27px;top:353.99px;font-size:9.4px;line-height:9.4px;color:#444444;">29</div>
<div class="t" style="left:4.27px;top:366.94px;font-size:9.4px;line-height:9.4px;color:#444444;">30</div>
<div class="t" style="left:4.27px;top:379.89px;font-size:9.4px;line-height:9.4px;color:#444444;">31</div>
<div style="position:absolute;left:17.60px;top:105.90px;width:1.80px;height:11.85px;background:#217346;"></div>
<div style="position:absolute;left:0.00px;top:383.30px;width:1000.00px;height:20.70px;background:#f0f0f0;"></div>
<svg style="position:absolute;left:0;top:0" width="1000" height="404"><path d="M23 391.6L18.3 394.7L23 397.8" fill="none" stroke="#555" stroke-width="1.1"/><path d="M41.8 391.6L46.5 394.7L41.8 397.8" fill="none" stroke="#555" stroke-width="1.1"/><path d="M653 394.5h7.8M656.9 390.6v7.8" stroke="#444" stroke-width="1.1"/><path d="M702 391.2v6.6l-5.2-3.3z" fill="#555"/></svg>
<div style="position:absolute;left:63.10px;top:393.40px;width:2.20px;height:2.20px;background:#444;border-radius:50%;"></div>
<div style="position:absolute;left:66.20px;top:393.40px;width:2.20px;height:2.20px;background:#444;border-radius:50%;"></div>
<div style="position:absolute;left:69.30px;top:393.40px;width:2.20px;height:2.20px;background:#444;border-radius:50%;"></div>
<div style="position:absolute;left:628.90px;top:393.40px;width:2.20px;height:2.20px;background:#444;border-radius:50%;"></div>
<div style="position:absolute;left:632.10px;top:393.40px;width:2.20px;height:2.20px;background:#444;border-radius:50%;"></div>
<div style="position:absolute;left:635.30px;top:393.40px;width:2.20px;height:2.20px;background:#444;border-radius:50%;"></div>
<div style="position:absolute;left:679.90px;top:391.30px;width:2.00px;height:2.00px;background:#555;border-radius:50%;"></div>
<div style="position:absolute;left:679.90px;top:394.30px;width:2.00px;height:2.00px;background:#555;border-radius:50%;"></div>
<div style="position:absolute;left:679.90px;top:397.40px;width:2.00px;height:2.00px;background:#555;border-radius:50%;"></div>
<div class="t" style="left:89.10px;top:390.89px;font-size:9.7px;line-height:9.7px;color:#383838;transform:scaleX(1.0382);transform-origin:0 0;">Shipping Cost</div>
<div class="t" style="left:172.80px;top:390.89px;font-size:9.7px;line-height:9.7px;color:#383838;transform:scaleX(1.0255);transform-origin:0 0;">Orders</div>
<div class="t" style="left:223.80px;top:390.89px;font-size:9.7px;line-height:9.7px;color:#383838;transform:scaleX(1.0376);transform-origin:0 0;">Pivot Calculations</div>
<div class="t" style="left:325.40px;top:390.89px;font-size:9.7px;line-height:9.7px;color:#383838;transform:scaleX(1.0402);transform-origin:0 0;">Dashboard Creation</div>
<div style="position:absolute;left:162.80px;top:386.50px;width:1.00px;height:17.50px;background:#d4d4d4;"></div>
<div style="position:absolute;left:213.20px;top:386.50px;width:1.00px;height:17.50px;background:#d4d4d4;"></div>
<div style="position:absolute;left:314.10px;top:386.50px;width:1.00px;height:17.50px;background:#d4d4d4;"></div>
<div style="position:absolute;left:426.00px;top:386.50px;width:1.00px;height:17.50px;background:#d4d4d4;"></div>
<div style="position:absolute;left:428.70px;top:383.30px;width:146.00px;height:20.70px;background:#ffffff;"></div>
<div class="t" style="left:435.80px;top:388.77px;font-size:10.2px;line-height:10.2px;color:#333333;transform:scaleX(1.0035);transform-origin:0 0;-webkit-text-stroke:0.4px #333;">Sales Dashboard Calculation</div>
<div style="position:absolute;left:435.80px;top:400.60px;width:132.00px;height:1.60px;background:#1e7a4f;border-radius:1px;"></div>
<div style="position:absolute;left:577.40px;top:386.50px;width:0.80px;height:17.50px;background:#d4d4d4;"></div>
<div class="t" style="left:588.00px;top:390.89px;font-size:9.7px;line-height:9.7px;color:#383838;transform:scaleX(1.0782);transform-origin:0 0;">Wirefra</div>
<div style="position:absolute;left:613.00px;top:386.00px;width:11.00px;height:17.00px;background:linear-gradient(90deg,rgba(240,240,240,0),#f0f0f0 85%);"></div>
<div style="position:absolute;left:702.00px;top:388.00px;width:308.00px;height:13.00px;background:#f7f7f7;border-radius:6px;"></div>
<div style="position:absolute;left:861.00px;top:391.60px;width:145.00px;height:6.60px;background:#737373;border-radius:3.3px;"></div>
<div style="position:absolute;left:311.40px;top:193.40px;width:47.90px;height:15.90px;background:#ffffff;border:1px solid #bdbdbd;box-sizing:border-box;box-shadow:1px 1px 1px rgba(0,0,0,0.25);"></div>
<div style="position:absolute;left:309.40px;top:191.40px;width:48.90px;height:13.90px;background:#ffffff;border:1px solid #bdbdbd;box-sizing:border-box;box-shadow:1px 1px 1px rgba(0,0,0,0.25);"></div>
<div class="t" style="left:313.00px;top:194.71px;font-size:9.2px;line-height:9.2px;color:#555555;transform:scaleX(0.9200);transform-origin:0 0;opacity:0.6;">Chart Area</div>
<div style="position:absolute;left:315.30px;top:185.50px;width:48.40px;height:13.90px;background:#ffffff;border:1px solid #bdbdbd;box-sizing:border-box;box-shadow:1px 1px 1px rgba(0,0,0,0.3);"></div>
<div class="t" style="left:318.50px;top:188.21px;font-size:9.2px;line-height:9.2px;color:#7a7a7a;transform:scaleX(0.9550);transform-origin:0 0;">Chart Area</div>
<div style="position:absolute;left:269.30px;top:203.00px;width:9.70px;height:11.70px;background:#d9d9d9;"></div>
<div style="position:absolute;left:279.50px;top:203.00px;width:10.20px;height:11.70px;background:#d9d9d9;"></div>
<svg style="position:absolute;left:0;top:0" width="1000" height="404"><path d="M271.8 208.8h5M274.3 206.3v5M282 208.8h5" stroke="#707070" stroke-width="0.9"/></svg>
</body></html>
